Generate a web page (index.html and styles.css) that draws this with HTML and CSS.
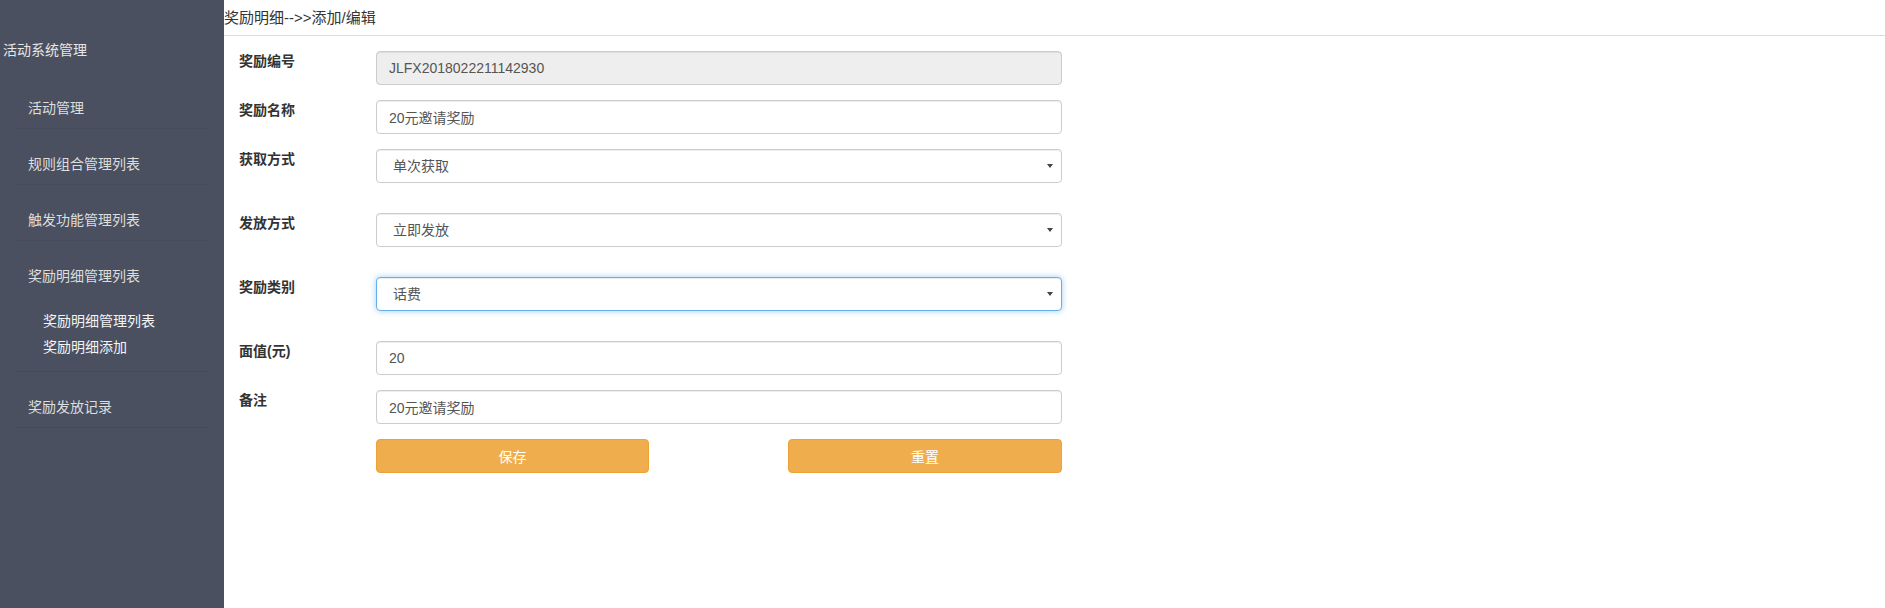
FILE: index.html
```html
<!DOCTYPE html>
<html lang="zh-CN">
<head>
<meta charset="utf-8">
<title>奖励明细添加</title>
<link rel="stylesheet" href="styles.css">
</head>
<body>
<div class="layout">
  <aside class="sidebar">
    <div class="sidebar-title">活动系统管理</div>
    <ul class="menu">
      <li class="menu-item">活动管理</li>
      <li class="menu-item">规则组合管理列表</li>
      <li class="menu-item">触发功能管理列表</li>
      <li class="menu-item">奖励明细管理列表
        <ul class="submenu">
          <li class="submenu-item">奖励明细管理列表</li>
          <li class="submenu-item">奖励明细添加</li>
        </ul>
      </li>
      <li class="menu-item">奖励发放记录</li>
    </ul>
  </aside>
  <main class="main">
    <div class="breadcrumb">奖励明细--&gt;&gt;添加/编辑</div>
    <form class="form">
      <div class="row">
        <label class="label">奖励编号</label>
        <input class="control" type="text" value="JLFX2018022211142930" disabled>
      </div>
      <div class="row">
        <label class="label">奖励名称</label>
        <input class="control" type="text" value="20元邀请奖励">
      </div>
      <div class="row row-select">
        <label class="label">获取方式</label>
        <div class="select-wrap">
          <select class="control select"><option>单次获取</option></select>
        </div>
      </div>
      <div class="row row-select">
        <label class="label">发放方式</label>
        <div class="select-wrap">
          <select class="control select"><option>立即发放</option></select>
        </div>
      </div>
      <div class="row row-select">
        <label class="label">奖励类别</label>
        <div class="select-wrap">
          <select class="control select focused"><option>话费</option></select>
        </div>
      </div>
      <div class="row">
        <label class="label">面值(元)</label>
        <input class="control" type="text" value="20">
      </div>
      <div class="row">
        <label class="label">备注</label>
        <input class="control" type="text" value="20元邀请奖励">
      </div>
      <div class="row">
        <span class="label"></span>
        <div class="buttons">
          <button type="button" class="btn">保存</button>
          <button type="button" class="btn">重置</button>
        </div>
      </div>
    </form>
  </main>
</div>
</body>
</html>
```
FILE: styles.css
```css
* { box-sizing: border-box; }
html, body {
  margin: 0;
  padding: 0;
  background: #fff;
}
body {
  font-family: "Liberation Sans", "Noto Sans CJK SC", sans-serif;
  font-size: 14px;
  color: #333;
}
.layout {
  display: flex;
  min-height: 608px;
}
.sidebar {
  width: 224px;
  flex: 0 0 224px;
  background: #4a5060;
  color: #dedede;
}
.sidebar-title {
  padding: 40px 0 0 3px;
  line-height: 20px;
  color: #e6e6e6;
}
.menu {
  list-style: none;
  margin: 13px 17px 0 15px;
  padding: 0;
}
.menu-item {
  padding: 25px 0 10px 13px;
  line-height: 20px;
  border-bottom: 1px solid #454b5a;
}
.submenu {
  list-style: none;
  margin: 22px 0 1px 0;
  padding: 0 0 0 15px;
}
.submenu-item {
  line-height: 26px;
  color: #f4f4f4;
}
.main {
  flex: 1;
}
.breadcrumb {
  height: 36px;
  line-height: 35px;
  font-size: 15px;
  color: #333;
  border-bottom: 1px solid #ddd;
}
.form {
  padding: 15px 0 0 15px;
}
.row {
  display: flex;
  align-items: flex-start;
  margin-bottom: 15px;
}
.row-select {
  margin-bottom: 30px;
}
.label {
  width: 137px;
  flex: 0 0 137px;
  line-height: 20px;
  font-weight: bold;
  color: #333;
}
.control {
  width: 686px;
  height: 34px;
  padding: 6px 12px;
  font-family: inherit;
  font-size: 14px;
  color: #555;
  background: #fff;
  border: 1px solid #ccc;
  border-radius: 4px;
  outline: none;
  box-shadow: inset 0 1px 1px rgba(0,0,0,.075);
}
.control:disabled {
  background: #eee;
  color: #555;
  opacity: 1;
}
.select-wrap {
  position: relative;
  width: 686px;
}
.select {
  appearance: none;
  -webkit-appearance: none;
  padding: 0 16px;
  display: block;
}
.select-wrap::after {
  content: "";
  position: absolute;
  right: 9px;
  top: 15px;
  border-left: 3px solid transparent;
  border-right: 3px solid transparent;
  border-top: 4px solid #444;
  pointer-events: none;
}
.focused {
  border-color: #66afe9;
  box-shadow: inset 0 1px 1px rgba(0,0,0,.075), 0 0 6px rgba(102,175,233,.6);
}
.buttons {
  width: 686px;
  display: flex;
  justify-content: space-between;
}
.btn {
  width: 273px;
  height: 34px;
  font-family: inherit;
  font-size: 14px;
  color: #fff;
  background: #f0ad4e;
  border: 1px solid #eea236;
  border-radius: 4px;
  padding: 0;
}
.btn + .btn {
  width: 274px;
}
```
